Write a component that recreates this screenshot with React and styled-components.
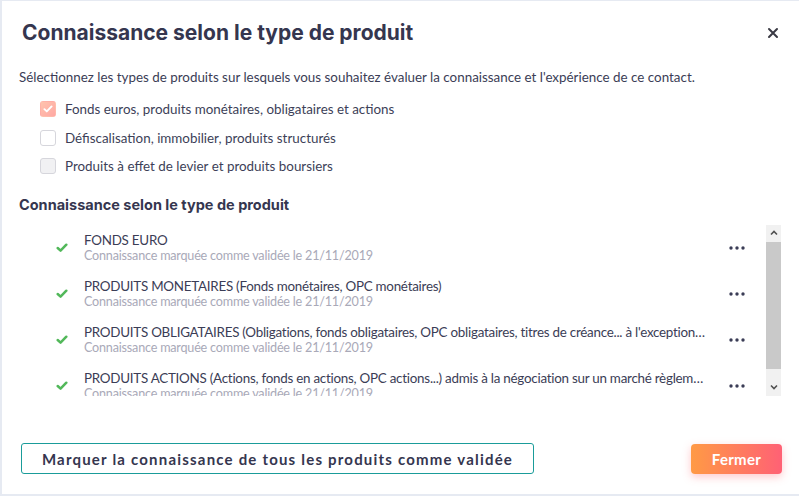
import React from "react";
import styled, { createGlobalStyle } from "styled-components";

const Global = createGlobalStyle`
  html, body { margin: 0; padding: 0; background: #ffffff; }
  * { box-sizing: border-box; }
`;

const Modal = styled.div`
  width: 799px;
  height: 496px;
  border: 2px solid #e6eaf2;
  border-top-width: 1px;
  border-right-width: 0;
  background: #fff;
  display: flex;
  flex-direction: column;
  font-family: Lato, "Liberation Sans", sans-serif;
  color: #3b3d56;
`;

const Header = styled.div`
  display: flex;
  align-items: center;
  justify-content: space-between;
  padding: 15px 20px 0 20px;
  height: 47px;
`;

const Title = styled.h1`
  margin: 0;
  font-family: Inter, "DejaVu Sans", sans-serif;
  font-weight: 700;
  font-size: 21px;
  color: #35364f;
`;

const Close = styled.button`
  border: 0;
  background: none;
  padding: 0;
  width: 12px;
  height: 12px;
  display: flex;
  cursor: pointer;
  margin-top: 1px;
`;

const Body = styled.div`
  padding: 0 18px 0 17px;
  display: flex;
  flex-direction: column;
`;

const Intro = styled.p`
  margin: 20px 0 9px 0;
  font-size: 13.4px;
  line-height: 18px;
`;

const Options = styled.div`
  display: flex;
  flex-direction: column;
  padding-left: 21px;
`;

const Option = styled.label`
  display: flex;
  align-items: center;
  gap: 9px;
  height: 28.5px;
  font-size: 13.4px;
  color: #3d3f58;
`;

const Box = styled.span`
  width: 16px;
  height: 16px;
  border-radius: 3px;
  display: flex;
  align-items: center;
  justify-content: center;
  border: 1px solid ${(p) => (p.$checked ? "transparent" : "#d6d6dc")};
  background: ${(p) =>
    p.$checked
      ? "linear-gradient(135deg, #ffc3ad, #ffa8a4)"
      : p.$disabled
      ? "#f1f1f3"
      : "#ffffff"};
`;

const SectionTitle = styled.h2`
  margin: 15px 0 0 0;
  height: 29px;
  font-family: Inter, "DejaVu Sans", sans-serif;
  font-weight: 700;
  font-size: 14.5px;
  color: #35364f;
`;

const ListArea = styled.div`
  margin-left: 23px;
  height: 171px;
  display: flex;
`;

const List = styled.div`
  flex: 1;
  min-width: 0;
  overflow: hidden;
`;

const ScrollBar = styled.div`
  width: 15px;
  display: flex;
  flex-direction: column;
  background: #f1f1f1;
`;

const ScrollArrow = styled.div`
  height: 17px;
  display: flex;
  align-items: center;
  justify-content: center;
  margin-top: ${(p) => (p.$bottom ? "auto" : "0")};
`;

const ScrollThumb = styled.div`
  height: 127px;
  background: #c9c9c9;
`;

const Row = styled.div`
  display: flex;
  align-items: center;
  height: 46px;
  padding-left: 14px;
  padding-right: 21px;
  padding-top: 1px;
`;

const RowText = styled.div`
  flex: 1;
  min-width: 0;
  margin-left: 16px;
  margin-right: 21px;
  display: flex;
  flex-direction: column;
`;

const Name = styled.div`
  font-size: 13.4px;
  line-height: 16px;
  letter-spacing: -0.25px;
  color: #3b3d56;
  white-space: nowrap;
  overflow: hidden;
  text-overflow: ellipsis;
`;

const Sub = styled.div`
  font-size: 12.6px;
  line-height: 16px;
  letter-spacing: -0.2px;
  color: #a9a9b8;
  white-space: nowrap;
`;

const Footer = styled.div`
  margin-top: auto;
  display: flex;
  justify-content: space-between;
  align-items: center;
  padding: 0 17px 20px 19px;
`;

const OutlineButton = styled.button`
  height: 31px;
  width: 513px;
  border: 1px solid #1a9c9a;
  border-radius: 3px;
  background: #fff;
  font-family: Lato, "Liberation Sans", sans-serif;
  font-weight: 700;
  font-size: 15px;
  letter-spacing: 1.2px;
  color: #35364f;
  cursor: pointer;
`;

const PrimaryButton = styled.button`
  height: 30px;
  width: 91px;
  border: 0;
  border-radius: 4px;
  background: linear-gradient(90deg, #ff9a45, #ff6175);
  box-shadow: 0 3px 8px rgba(255, 100, 110, 0.35);
  color: #fff;
  font-family: Lato, "Liberation Sans", sans-serif;
  font-weight: 700;
  font-size: 15px;
  letter-spacing: 0.3px;
  cursor: pointer;
`;

const Tick = ({ color = "#52b85a", size = 12, w = 2.6 }) => (
  <svg width={size} height={size * 0.8} viewBox="0 0 12 10">
    <path d="M1.5 5.2 L4.5 8 L10.5 1.8" fill="none" stroke={color} strokeWidth={w} strokeLinecap="round" strokeLinejoin="round" />
  </svg>
);

const Dots = () => (
  <svg width="16" height="4" viewBox="0 0 16 4">
    <circle cx="2" cy="2" r="1.7" fill="#3b3d56" />
    <circle cx="8" cy="2" r="1.7" fill="#3b3d56" />
    <circle cx="14" cy="2" r="1.7" fill="#3b3d56" />
  </svg>
);

const Chevron = ({ up }) => (
  <svg width="8" height="6" viewBox="0 0 8 6">
    <path d={up ? "M1 4.5 L4 1.5 L7 4.5" : "M1 1.5 L4 4.5 L7 1.5"} fill="none" stroke="#505050" strokeWidth="1.6" />
  </svg>
);

const products = [
  "FONDS EURO",
  "PRODUITS MONETAIRES (Fonds monétaires, OPC monétaires)",
  "PRODUITS OBLIGATAIRES (Obligations, fonds obligataires, OPC obligataires, titres de créance... à l'exception des obligations complexes)",
  "PRODUITS ACTIONS (Actions, fonds en actions, OPC actions...) admis à la négociation sur un marché règlementé",
];

export default function App() {
  return (
    <>
      <Global />
      <Modal>
        <Header>
          <Title>Connaissance selon le type de produit</Title>
          <Close aria-label="Fermer">
            <svg width="12" height="12" viewBox="0 0 12 12">
              <path d="M2 2 L10 10 M10 2 L2 10" stroke="#3a3a44" strokeWidth="2" strokeLinecap="round" />
            </svg>
          </Close>
        </Header>
        <Body>
          <Intro>
            Sélectionnez les types de produits sur lesquels vous souhaitez évaluer la connaissance et l'expérience de ce contact.
          </Intro>
          <Options>
            <Option>
              <Box $checked>
                <Tick color="#ffffff" size={10} w={2.4} />
              </Box>
              Fonds euros, produits monétaires, obligataires et actions
            </Option>
            <Option>
              <Box />
              Défiscalisation, immobilier, produits structurés
            </Option>
            <Option>
              <Box $disabled />
              Produits à effet de levier et produits boursiers
            </Option>
          </Options>
          <SectionTitle>Connaissance selon le type de produit</SectionTitle>
          <ListArea>
            <List>
              {products.map((p) => (
                <Row key={p}>
                  <Tick />
                  <RowText>
                    <Name>{p}</Name>
                    <Sub>Connaissance marquée comme validée le 21/11/2019</Sub>
                  </RowText>
                  <Dots />
                </Row>
              ))}
            </List>
            <ScrollBar>
              <ScrollArrow>
                <Chevron up />
              </ScrollArrow>
              <ScrollThumb />
              <ScrollArrow $bottom>
                <Chevron />
              </ScrollArrow>
            </ScrollBar>
          </ListArea>
        </Body>
        <Footer>
          <OutlineButton>Marquer la connaissance de tous les produits comme validée</OutlineButton>
          <PrimaryButton>Fermer</PrimaryButton>
        </Footer>
      </Modal>
    </>
  );
}
